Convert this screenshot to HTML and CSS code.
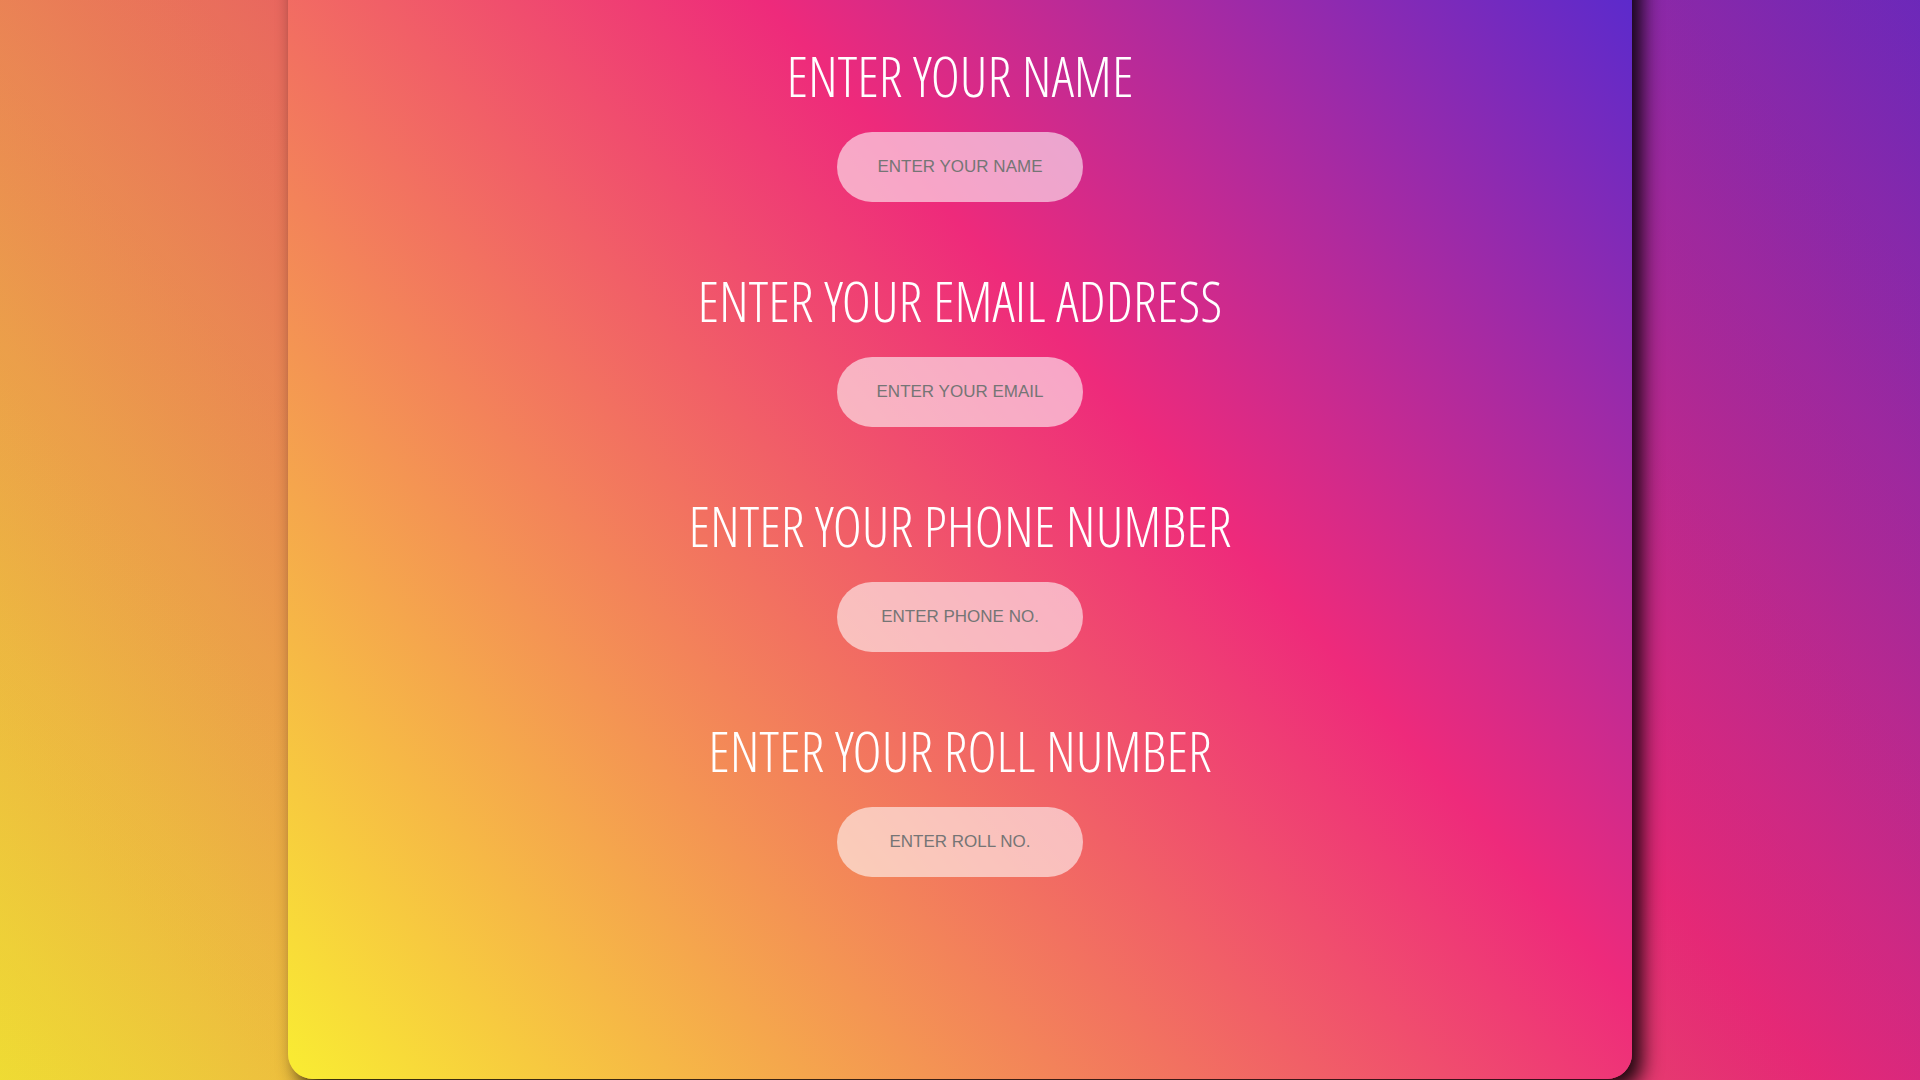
FILE: index.html
```html
<!DOCTYPE html>
<html lang="en">
<head>
<meta charset="utf-8">
<title>Registration</title>
<link rel="stylesheet" href="styles.css">
</head>
<body>
<main class="page">
  <form class="card">
    <div class="field">
      <label class="label" for="name">ENTER YOUR NAME</label>
      <input class="input" id="name" type="text" placeholder="ENTER YOUR NAME">
    </div>
    <div class="field">
      <label class="label" for="email">ENTER YOUR EMAIL ADDRESS</label>
      <input class="input" id="email" type="email" placeholder="ENTER YOUR EMAIL">
    </div>
    <div class="field">
      <label class="label" for="phone">ENTER YOUR PHONE NUMBER</label>
      <input class="input" id="phone" type="tel" placeholder="ENTER PHONE NO.">
    </div>
    <div class="field">
      <label class="label" for="roll">ENTER YOUR ROLL NUMBER</label>
      <input class="input" id="roll" type="text" placeholder="ENTER ROLL NO.">
    </div>
  </form>
</main>
</body>
</html>
```
FILE: styles.css
```css
* {
  box-sizing: border-box;
}

body {
  margin: 0;
}

.page {
  display: flex;
  justify-content: center;
  min-height: 100vh;
  padding-bottom: 1px;
  overflow: hidden;
  background:
    linear-gradient(rgba(0, 0, 0, 0.04), rgba(0, 0, 0, 0.04)),
    linear-gradient(50deg, #f9ed32, #ee2a7b, #002aff) left 0 bottom -100px / 100% 2250px;
}

.card {
  display: flex;
  flex-direction: column;
  align-items: center;
  gap: 57px;
  width: 70%;
  margin-top: -60px;
  padding: 94px 0 202px;
  border-radius: 25px;
  background: linear-gradient(49deg, #f9ed32, #ee2a7b, #002aff) bottom / 100% 1710px;
  box-shadow: 10px 10px 20px rgba(0, 0, 0, 0.9);
}

.field {
  display: flex;
  flex-direction: column;
  align-items: center;
  gap: 16px;
}

.label {
  color: #fff;
  font-family: "Open Sans Condensed Light", "Open Sans Light Condensed", "OpenSans-CondensedLight", "Open Sans Condensed", "Open Sans", sans-serif;
  font-size: 56px;
  font-weight: 300;
  line-height: 82px;
  white-space: nowrap;
}

.input {
  width: 246px;
  height: 70px;
  padding: 0 20px;
  border: 0;
  border-radius: 35px;
  background: rgba(255, 255, 255, 0.58);
  font-family: "Liberation Sans", Arial, sans-serif;
  font-size: 17px;
  text-align: center;
}

.input::placeholder {
  color: #757575;
}
```
